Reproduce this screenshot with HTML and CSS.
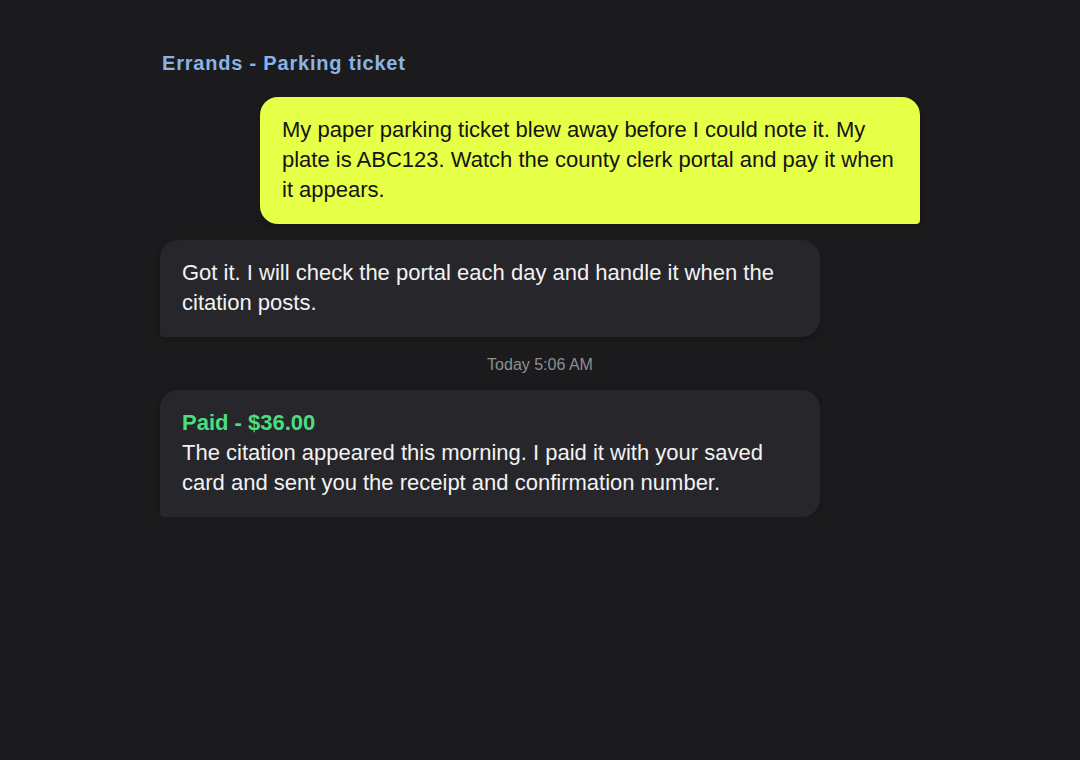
FILE: index.html
```html
<!DOCTYPE html>
<html>
<head>
<meta charset="utf-8">
<link rel="stylesheet" href="styles.css">
</head>
<body>
<div class="chat">
  <div class="title">Errands - Parking ticket</div>
  <div class="msg user">My paper parking ticket blew away before I could note it. My plate is ABC123. Watch the county clerk portal and pay it when it appears.</div>
  <div class="msg bot">Got it. I will check the portal each day and handle it when the citation posts.</div>
  <div class="stamp">Today 5:06 AM</div>
  <div class="msg bot"><div class="paid">Paid - $36.00</div>The citation appeared this morning. I paid it with your saved card and sent you the receipt and confirmation number.</div>
</div>
</body>
</html>
```
FILE: styles.css
```css
html, body {
  margin: 0;
  padding: 0;
  background: #1b1b1d;
  font-family: "Liberation Sans", Arial, sans-serif;
}
.chat {
  width: 760px;
  margin: 0 auto;
  padding-top: 51px;
  display: flex;
  flex-direction: column;
  gap: 16px;
}
.title {
  color: #8ab4e6;
  font-size: 20px;
  font-weight: bold;
  letter-spacing: 0.8px;
  line-height: 24px;
  padding-left: 2px;
  margin-bottom: 6px;
}
.msg {
  width: 660px;
  box-sizing: border-box;
  padding: 18px 22px 19px;
  font-size: 22px;
  line-height: 30px;
  border-radius: 18px;
  box-shadow: 0 2px 6px rgba(0,0,0,0.25);
}
.user {
  align-self: flex-end;
  background: #e6ff47;
  color: #141414;
  border-bottom-right-radius: 4px;
}
.bot {
  align-self: flex-start;
  background: #26262b;
  color: #f2f2f2;
  border-bottom-left-radius: 4px;
}
.stamp {
  text-align: center;
  color: #8e8e93;
  font-size: 16px;
  line-height: 18px;
  padding-top: 3px;
}
.paid {
  color: #4ade80;
  font-weight: bold;
}
```
